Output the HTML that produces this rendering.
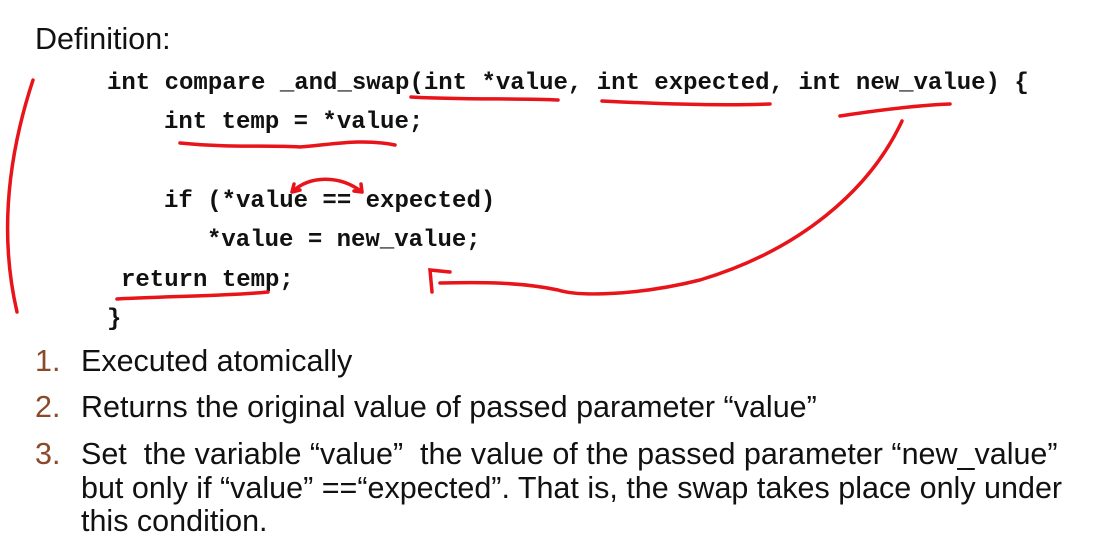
<!DOCTYPE html>
<html><head><meta charset="utf-8"><style>
body{margin:0;width:1111px;height:557px;background:#fff;position:relative;overflow:hidden}
.s{position:absolute;font-family:"Liberation Sans",sans-serif;font-size:30.5px;line-height:30px;color:#111;white-space:pre}
.c{position:absolute;font-family:"Liberation Mono",monospace;font-weight:bold;font-size:24px;line-height:24px;color:#111;white-space:pre}
.n{color:#8a4a2a}
svg{position:absolute;left:0;top:0}
</style></head><body>
<div class="s" style="left:35px;top:24px">Definition:</div>
<div class="c" style="left:107px;top:72px">int compare _and_swap(int *value, int expected, int new_value) {</div>
<div class="c" style="left:164px;top:111px">int temp = *value;</div>
<div class="c" style="left:164px;top:190px">if (*value == expected)</div>
<div class="c" style="left:207px;top:229px">*value = new_value;</div>
<div class="c" style="left:121px;top:269px">return temp;</div>
<div class="c" style="left:107px;top:308px">}</div>
<div class="s n" style="left:35px;top:346px">1.</div><div class="s" style="left:81px;top:346px">Executed atomically</div>
<div class="s n" style="left:35px;top:392px">2.</div><div class="s" style="left:81px;top:392px">Returns the original value of passed parameter “value”</div>
<div class="s n" style="left:35px;top:439px">3.</div><div class="s" style="left:81px;top:439px">Set  the variable “value”  the value of the passed parameter “new_value”</div>
<div class="s" style="left:81px;top:473px">but only if “value” ==“expected”. That is, the swap takes place only under</div>
<div class="s" style="left:81px;top:506px">this condition.</div>
<svg width="1111" height="557" fill="none" stroke="#e8141a" stroke-width="3.5" stroke-linecap="round">
<path d="M33 80 C10 150 -2 230 17 312"/>
<path d="M411 97 C460 100 520 98 558 100"/>
<path d="M602 101 C660 104 720 106 770 104"/>
<path d="M840 116 C880 110 920 105 950 104"/>
<path d="M180 143 C230 148 270 145 300 147 C330 145 360 138 395 145"/>
<path d="M292 192 C310 175 340 175 362 192 M292 192 l8 -2 M292 192 l2 -8 M362 192 l-8 -1 M362 192 l-1 -8"/>
<path d="M117 299 C170 296 230 296 268 292"/>
<path d="M902 121 C870 190 800 250 700 280 C640 295 580 297 558 290 C520 282 480 282 440 283 M432 292 L430 270 L450 272"/>
</svg>
</body></html>
